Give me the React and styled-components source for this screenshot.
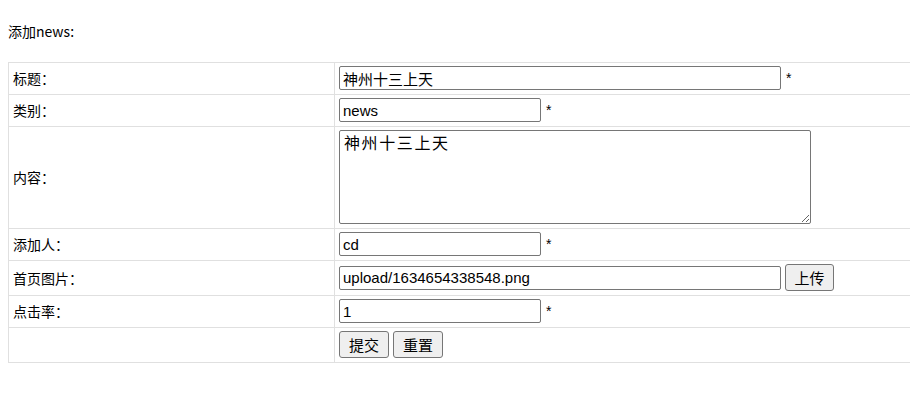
import styled, { createGlobalStyle } from "styled-components";

const GlobalStyle = createGlobalStyle`
    body {
        margin: 8px 0 8px 8px;
        background: #fff;
        color: #000;
        font-family: "Microsoft YaHei", "Noto Sans CJK SC", sans-serif;
        font-size: 14px;
    }
`

const Title = styled.div`
    margin: 13px 0 21px;
    line-height: 20px;
    font-size: 14px;
`

/* table is wider than the window, its right edge is cut off */
const TableWrap = styled.div`
    width: calc(100vw - 8px);
    overflow: hidden;
`

const FormTable = styled.table`
    width: 1200px;
    border-collapse: collapse;

    td {
        border: 1px solid #e0e0e0;
        padding: 3px 4px 4px;
        vertical-align: middle;
    }

    td.label {
        width: 317px;
        font-size: 14px;
    }
`

const Field = styled.div`
    display: flex;
    align-items: center;
    gap: ${(p) => p.$gap || 5}px;
`

const TextInput = styled.input`
    box-sizing: border-box;
    width: ${(p) => p.$w}px;
    height: 24px;
    margin: 0;
    padding: 0 3px;
    border: 1px solid #767676;
    border-radius: 2px;
    font-family: "Liberation Sans", Arial, "Noto Sans CJK SC", sans-serif;
    font-size: 15px;
    color: #000;
    outline: none;
`

const TextArea = styled.textarea`
    box-sizing: border-box;
    display: block;
    width: 472px;
    height: 94px;
    margin: 0;
    padding: 0 4px;
    border: 1px solid #767676;
    border-radius: 2px;
    font-family: "Noto Sans CJK SC", monospace;
    font-size: 16px;
    letter-spacing: 1.6px;
    line-height: 22px;
    color: #000;
    outline: none;
`

const Star = styled.span`
    font-family: "Liberation Sans", Arial, sans-serif;
    font-size: 14px;
`

const Button = styled.button`
    box-sizing: border-box;
    width: ${(p) => p.$w || 50}px;
    height: 27px;
    margin: 0;
    padding: 0;
    border: 1px solid #767676;
    border-radius: 3px;
    background: #efefef;
    font-family: "Microsoft YaHei", "Noto Sans CJK SC", sans-serif;
    font-size: 15px;
    color: #000;
`

const Buttons = styled.div`
    display: flex;
    gap: 4px;
`

const App = () => {
    return (
        <>
            <GlobalStyle />
            <Title>添加news:</Title>
            <TableWrap>
                <FormTable>
                    <tbody>
                        <tr>
                            <td className="label">标题：</td>
                            <td>
                                <Field>
                                    <TextInput $w={442} defaultValue="神州十三上天" />
                                    <Star>*</Star>
                                </Field>
                            </td>
                        </tr>
                        <tr>
                            <td className="label">类别：</td>
                            <td>
                                <Field>
                                    <TextInput $w={202} defaultValue="news" />
                                    <Star>*</Star>
                                </Field>
                            </td>
                        </tr>
                        <tr>
                            <td className="label">内容：</td>
                            <td>
                                <TextArea defaultValue="神州十三上天" />
                            </td>
                        </tr>
                        <tr>
                            <td className="label">添加人：</td>
                            <td>
                                <Field>
                                    <TextInput $w={202} defaultValue="cd" />
                                    <Star>*</Star>
                                </Field>
                            </td>
                        </tr>
                        <tr>
                            <td className="label">首页图片：</td>
                            <td>
                                <Field $gap={4}>
                                    <TextInput $w={442} defaultValue="upload/1634654338548.png" />
                                    <Button $w={49}>上传</Button>
                                </Field>
                            </td>
                        </tr>
                        <tr>
                            <td className="label">点击率：</td>
                            <td>
                                <Field>
                                    <TextInput $w={202} defaultValue="1" />
                                    <Star>*</Star>
                                </Field>
                            </td>
                        </tr>
                        <tr>
                            <td className="label"></td>
                            <td>
                                <Buttons>
                                    <Button>提交</Button>
                                    <Button>重置</Button>
                                </Buttons>
                            </td>
                        </tr>
                    </tbody>
                </FormTable>
            </TableWrap>
        </>
    )
}

export default App;
